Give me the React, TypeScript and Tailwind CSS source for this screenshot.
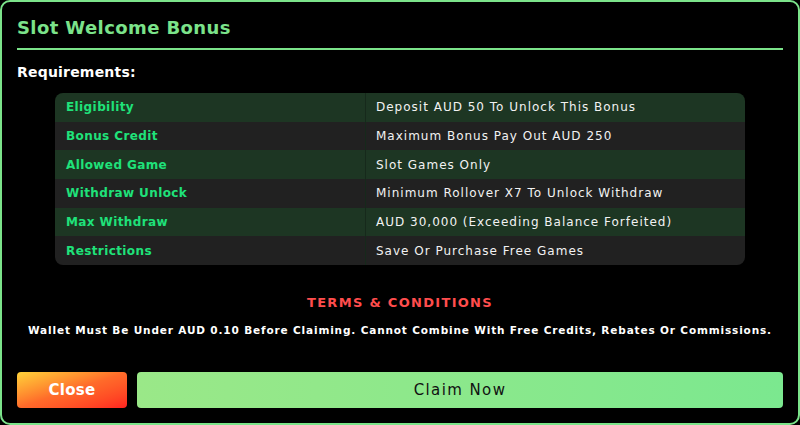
const rows = [
  { label: 'Eligibility', value: 'Deposit AUD 50 To Unlock This Bonus' },
  { label: 'Bonus Credit', value: 'Maximum Bonus Pay Out AUD 250' },
  { label: 'Allowed Game', value: 'Slot Games Only' },
  { label: 'Withdraw Unlock', value: 'Minimum Rollover X7 To Unlock Withdraw' },
  { label: 'Max Withdraw', value: 'AUD 30,000 (Exceeding Balance Forfeited)' },
  { label: 'Restrictions', value: 'Save Or Purchase Free Games' },
]

export default function App() {
  return (
    <div className="w-[800px] h-[425px] bg-black font-['DejaVu_Sans',sans-serif]">
      <div className="h-full border-2 border-[#7be38a] rounded-[10px] px-[15px] flex flex-col">
        <h2 className="text-[18px] font-bold text-[#7be38a] pt-[16px] pb-[10px] leading-[20px] tracking-[0.4px]">
          Slot Welcome Bonus
        </h2>
        <div className="h-[2px] bg-[#7be38a]" />
        <div className="text-[14px] font-bold text-white mt-[13px] leading-[18px] tracking-[0.2px]">Requirements:</div>

        <div className="mx-[38px] mt-[12px] rounded-[8px] overflow-hidden">
          {rows.map((row, i) => (
            <div
              key={row.label}
              className={`flex h-[28.7px] items-center text-[12px] ${i % 2 === 0 ? 'bg-[#1d3623]' : 'bg-[#212121]'}`}
            >
              <div className="w-[311px] h-full flex items-center pl-[11px] font-bold text-[#1fe27a] border-r border-[#16291b] tracking-[0.4px]">
                {row.label}
              </div>
              <div className="flex-1 pl-[10px] text-[#f2f2f2] tracking-[1px]">{row.value}</div>
            </div>
          ))}
        </div>

        <div className="mt-[30px] text-center text-[13px] font-bold text-[#ff4d4d] tracking-[1.3px] leading-[16px]">
          TERMS &amp; CONDITIONS
        </div>
        <div className="mt-[12px] text-center text-[10.5px] font-bold text-white tracking-[0.85px] leading-[14px]">
          Wallet Must Be Under AUD 0.10 Before Claiming. Cannot Combine With Free Credits, Rebates Or Commissions.
        </div>

        <div className="mt-auto mb-[15px] flex gap-[10px]">
          <button className="w-[110px] h-[36px] rounded-[4px] bg-gradient-to-br from-[#ffd23a] via-[#ff6b2a] to-[#ff2020] text-white font-bold text-[15px] tracking-[0.3px]">
            Close
          </button>
          <button className="flex-1 h-[36px] rounded-[4px] bg-gradient-to-r from-[#9ae888] to-[#7be88f] text-[#111] text-[15px] font-medium tracking-[1.4px]">
            Claim Now
          </button>
        </div>
      </div>
    </div>
  )
}
